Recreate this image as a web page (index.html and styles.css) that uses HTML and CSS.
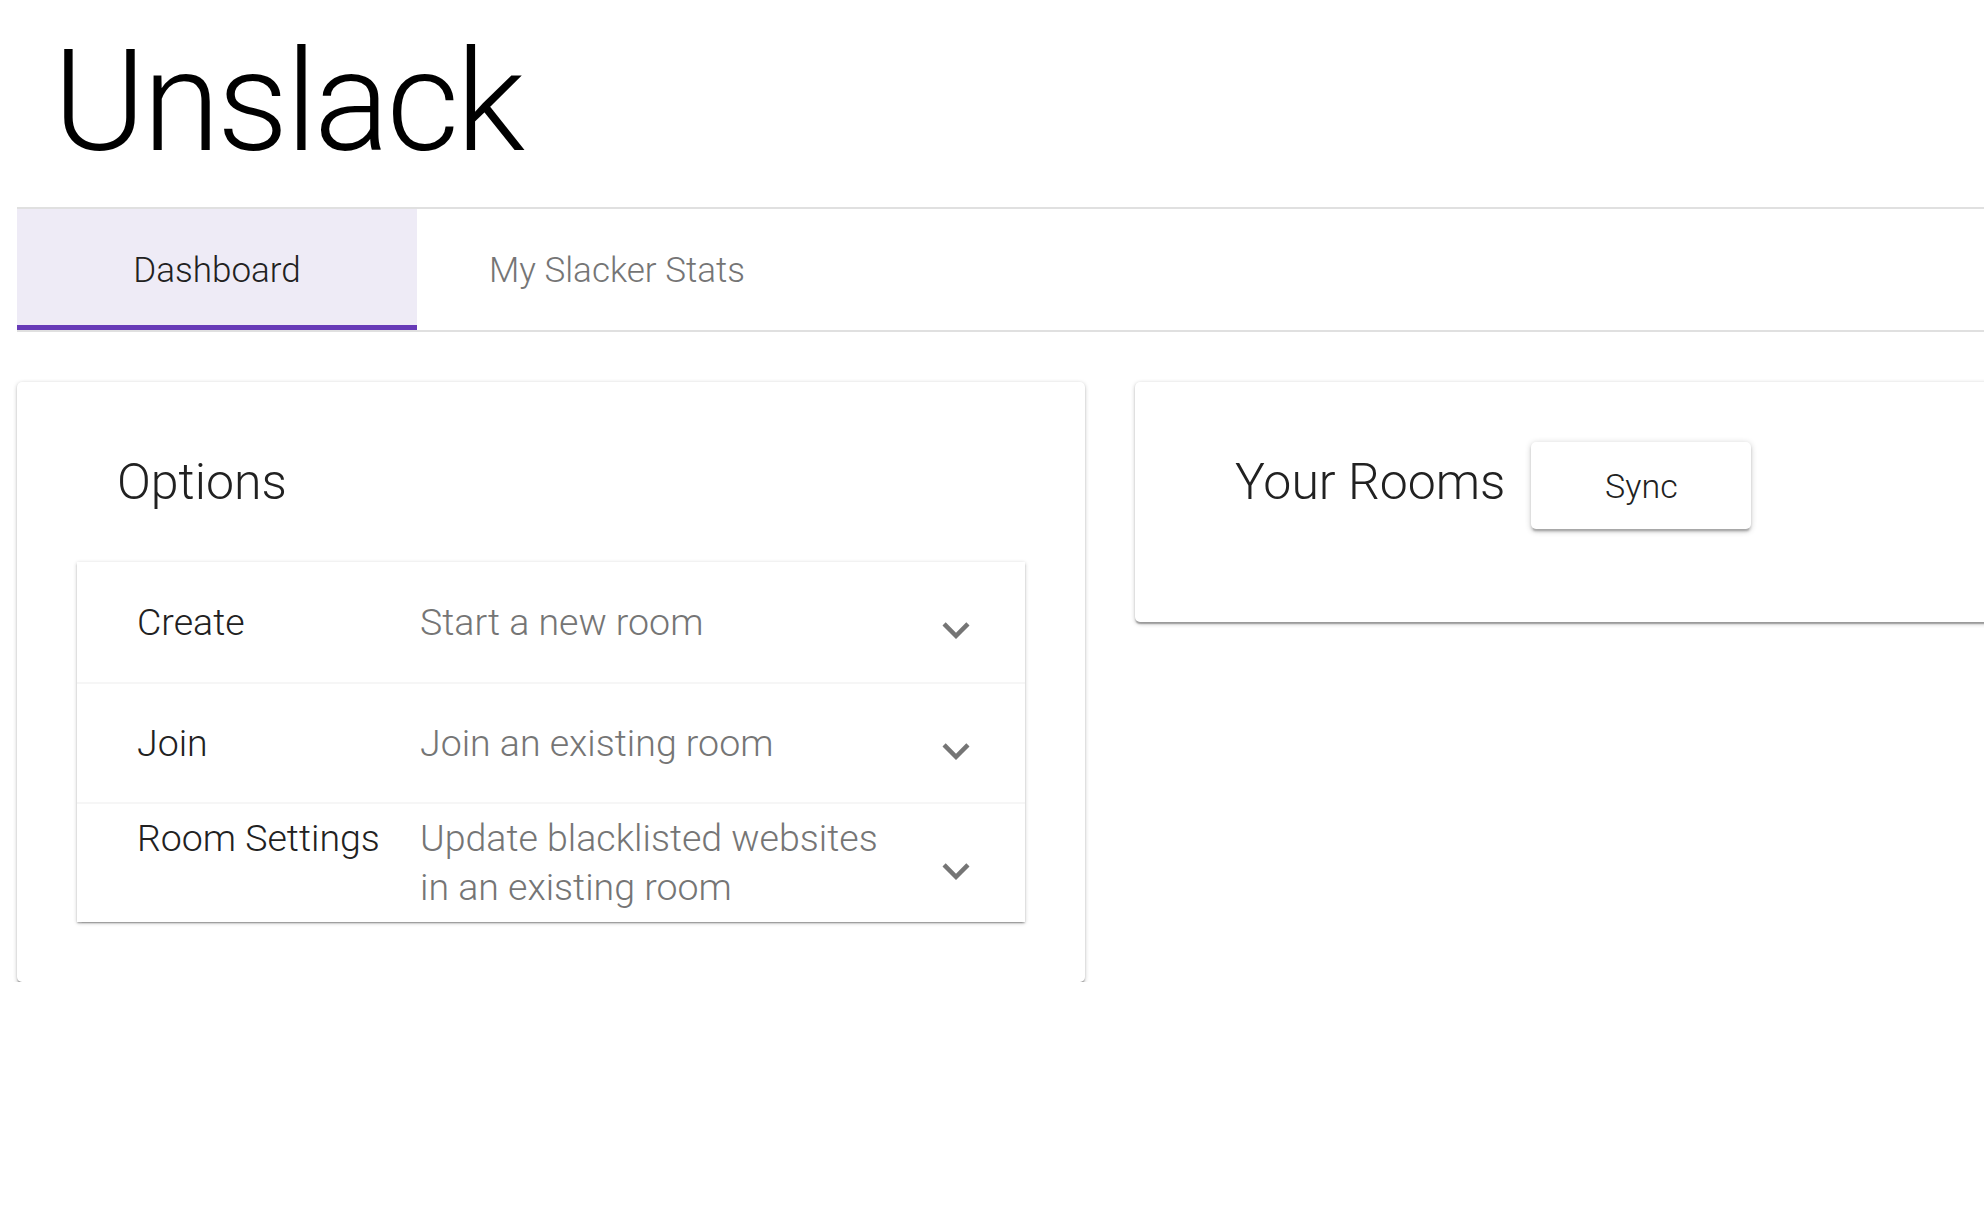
FILE: index.html
```html
<!DOCTYPE html>
<html lang="en">
<head>
<meta charset="utf-8">
<title>Unslack</title>
<link rel="stylesheet" href="styles.css">
</head>
<body>
<div class="page">
  <h1 class="title">Unslack</h1>
  <nav class="tabs">
    <div class="tab tab-active">Dashboard</div>
    <div class="tab">My Slacker Stats</div>
  </nav>
  <div class="grid">
    <section class="card">
      <div class="card-head"><h2 class="heading">Options</h2></div>
      <div class="panels">
        <div class="row">
          <div class="row-content">
            <div class="label">Create</div>
            <div class="desc">Start a new room</div>
          </div>
          <span class="expand"><svg viewBox="0 0 24 24" width="54" height="54"><path d="M16.59 8.59L12 13.17 7.41 8.59 6 10l6 6 6-6z"/></svg></span>
        </div>
        <div class="row">
          <div class="row-content">
            <div class="label">Join</div>
            <div class="desc">Join an existing room</div>
          </div>
          <span class="expand"><svg viewBox="0 0 24 24" width="54" height="54"><path d="M16.59 8.59L12 13.17 7.41 8.59 6 10l6 6 6-6z"/></svg></span>
        </div>
        <div class="row">
          <div class="row-content">
            <div class="label">Room Settings</div>
            <div class="desc">Update blacklisted websites in an existing room</div>
          </div>
          <span class="expand"><svg viewBox="0 0 24 24" width="54" height="54"><path d="M16.59 8.59L12 13.17 7.41 8.59 6 10l6 6 6-6z"/></svg></span>
        </div>
      </div>
    </section>
    <section class="card">
      <div class="card-head"><h2 class="heading">Your Rooms</h2><button class="btn">Sync</button></div>
    </section>
  </div>
</div>
</body>
</html>
```

FILE: styles.css
```css
html, body {
  margin: 0;
  padding: 0;
  overflow: hidden;
  background: #fff;
}
body {
  font-family: Roboto, "Noto Sans", sans-serif;
  color: #212121;
}
.page {
  padding-left: 17px;
  width: 2186px;
}
.title {
  margin: 0;
  padding: 22px 0 0 36px;
  font-size: 141px;
  font-weight: 300;
  line-height: 160px;
  letter-spacing: -0.022em;
  color: #000;
}
.tabs {
  margin-top: 25px;
  display: flex;
  height: 121px;
  border-top: 2px solid #e0e0e0;
  border-bottom: 2px solid #e0e0e0;
}
.tab {
  width: 400px;
  display: flex;
  align-items: center;
  justify-content: center;
  padding-top: 1px;
  font-size: 35px;
  font-weight: 300;
  color: #757575;
}
.tab-active {
  background: #eeebf6;
  color: #212121;
  box-shadow: inset 0 -5px 0 #673ab7;
}
.grid {
  display: grid;
  grid-template-columns: 1068px 1068px;
  gap: 50px;
  margin-top: 50px;
  align-items: start;
}
.card {
  background: #fff;
  border-radius: 5px;
  padding: 60px;
  box-shadow: 0 1.25px 4px rgba(0,0,0,.22), 0 1.5px 1.5px rgba(0,0,0,.16), 0 2.5px 1.25px -1.25px rgba(0,0,0,.14);
}
.card-head {
  display: flex;
  align-items: flex-start;
  gap: 26px;
  height: 80px;
  padding-left: 40px;
  margin-bottom: 40px;
}
.heading {
  margin: 0;
  font-size: 50px;
  font-weight: 300;
  line-height: 80px;
  color: #212121;
}
.btn {
  flex: none;
  width: 220px;
  height: 87px;
  border: 0;
  border-radius: 5px;
  background: #fff;
  font-family: Roboto, "Noto Sans", sans-serif;
  font-size: 34px;
  font-weight: 300;
  color: #212121;
  box-shadow: 0 1.25px 6.25px rgba(0,0,0,.2), 0 2.5px 2.5px rgba(0,0,0,.14), 0 3.75px 1.25px -2.5px rgba(0,0,0,.12);
}
.panels {
  background: #fff;
  box-shadow: 0 1.25px 4px rgba(0,0,0,.22), 0 1.5px 1.5px rgba(0,0,0,.16), 0 2.5px 1.25px -1.25px rgba(0,0,0,.14);
}
.row {
  box-sizing: border-box;
  display: flex;
  align-items: center;
  height: 120px;
  padding-left: 60px;
  font-size: 37.5px;
  font-weight: 300;
  line-height: 49px;
}
.row + .row {
  border-top: 2px solid #f6f6f6;
}
.row-content {
  display: flex;
  align-items: flex-start;
}
.label {
  flex: none;
  width: 283px;
  color: #212121;
}
.desc {
  flex: none;
  width: 470px;
  color: #757575;
}
.expand {
  margin-left: auto;
  margin-right: 42px;
  margin-top: 15px;
  width: 54px;
  height: 54px;
  fill: #757575;
}
.expand svg {
  display: block;
}
```
